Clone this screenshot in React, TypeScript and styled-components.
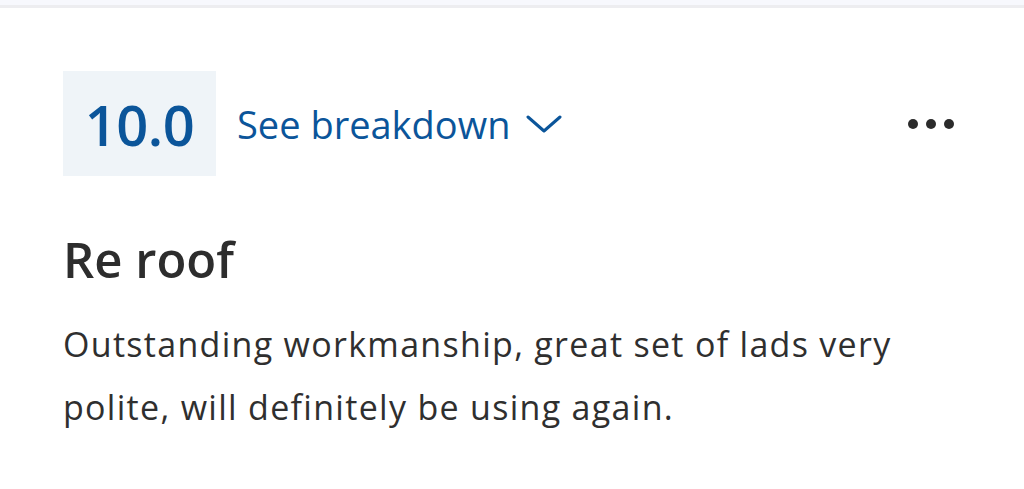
import React from "react";
import styled, { createGlobalStyle } from "styled-components";

const Global = createGlobalStyle`
  html, body { margin: 0; padding: 0; background: #ffffff; }
  body { font-family: "Open Sans", "Noto Sans", sans-serif; }
`;

const Page = styled.div`
  width: 1024px;
  height: 489px;
  background: #ffffff;
  display: flex;
  flex-direction: column;
  overflow: hidden;
`;

const TopStrip = styled.div`
  height: 5px;
  background: #f7f8fd;
  border-bottom: 3px solid #ededf0;
`;

const Card = styled.div`
  padding: 63px 70px 0 63px;
  display: flex;
  flex-direction: column;
`;

const Header = styled.div`
  display: flex;
  align-items: center;
`;

const Score = styled.div`
  width: 153px;
  height: 105px;
  background: #eff4f8;
  color: #0b559a;
  font-size: 56px;
  font-weight: 600;
  display: flex;
  align-items: center;
  justify-content: center;
  letter-spacing: -0.5px;
`;

const Breakdown = styled.button`
  margin-left: 21px;
  border: none;
  background: none;
  padding: 0;
  display: flex;
  align-items: center;
  gap: 16px;
  color: #0b559a;
  font-family: "Open Sans", sans-serif;
  font-size: 38px;
  font-weight: 500;
  cursor: pointer;
`;

const Spacer = styled.div`
  flex: 1;
`;

const More = styled.div`
  display: flex;
  gap: 8px;
  align-items: center;
`;

const Dot = styled.span`
  width: 10px;
  height: 10px;
  border-radius: 50%;
  background: #2b2b2b;
`;

const Title = styled.h2`
  margin: 51px 0 0 0;
  font-size: 49px;
  font-weight: 600;
  color: #2d2d2d;
  line-height: 64px;
`;

const Body = styled.p`
  margin: 22px 0 0 0;
  font-size: 34px;
  letter-spacing: 1.3px;
  line-height: 63px;
  color: #2f2f2f;
  max-width: 880px;
`;

export default function App() {
  return (
    <Page>
      <Global />
      <TopStrip />
      <Card>
        <Header>
          <Score>10.0</Score>
          <Breakdown>
            See breakdown
            <svg width="36" height="18" viewBox="0 0 36 18" fill="none">
              <path d="M2 2 L18 16 L34 2" stroke="#0b559a" strokeWidth="3" strokeLinecap="round" strokeLinejoin="round" />
            </svg>
          </Breakdown>
          <Spacer />
          <More>
            <Dot />
            <Dot />
            <Dot />
          </More>
        </Header>
        <Title>Re roof</Title>
        <Body>Outstanding workmanship, great set of lads very polite, will definitely be using again.</Body>
      </Card>
    </Page>
  );
}
